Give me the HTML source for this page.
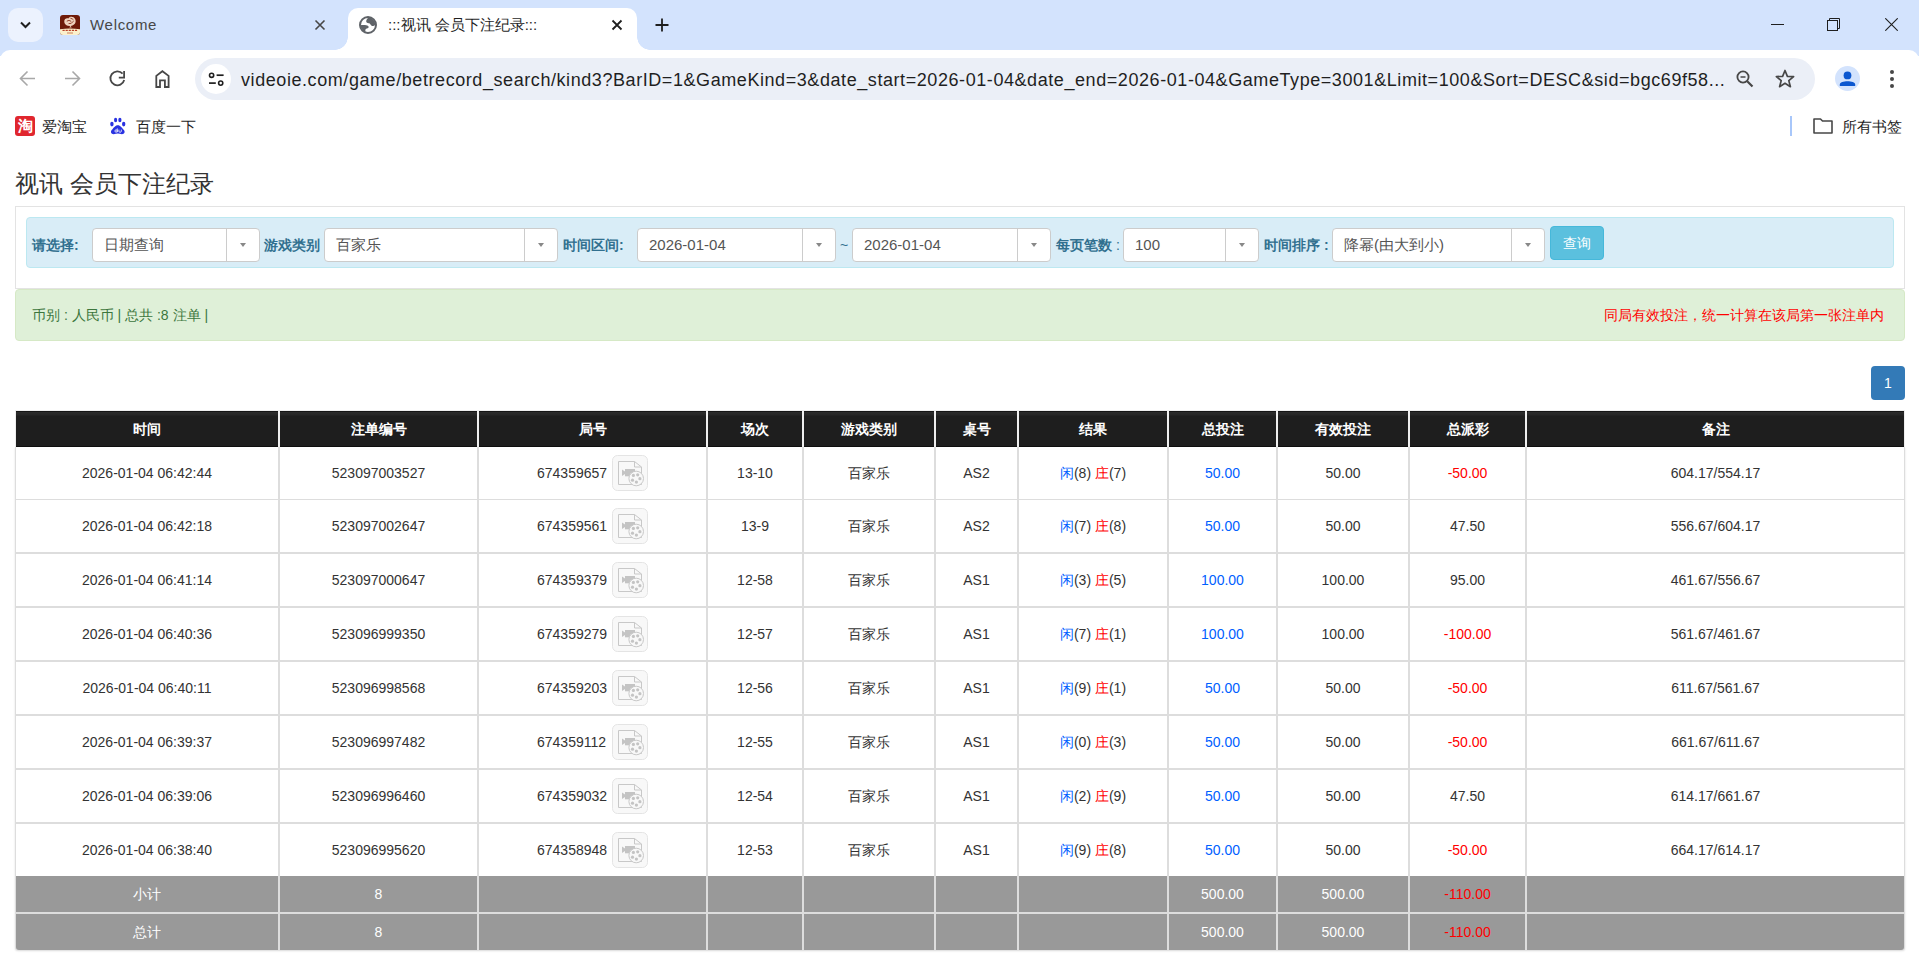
<!DOCTYPE html><html><head><meta charset="utf-8"><title>视讯 会员下注纪录</title><style>
*{box-sizing:border-box;margin:0;padding:0}
html,body{width:1919px;height:976px;overflow:hidden;background:#fff}
body{position:relative;font-family:"Liberation Sans",sans-serif;color:#333}
.a{position:absolute}
.tabstrip{left:0;top:0;width:1919px;height:56px;background:#d3e3fd}
.toolbar{left:0;top:50px;width:1919px;height:100px;background:#fff;border-radius:10px 10px 0 0}
.tabtxt{font-size:15px;color:#1f1f1f;white-space:nowrap;line-height:18px}
.omni{left:195px;top:58px;width:1620px;height:42px;border-radius:21px;background:#ebeff7}
.url{left:241px;top:68px;font-size:18px;line-height:24px;color:#1f1f1f;white-space:nowrap;letter-spacing:0.57px}
.bm{font-size:15px;color:#1f1f1f;line-height:18px;white-space:nowrap}
.title{left:15px;top:167px;font-size:24px;line-height:34px;color:#333;white-space:nowrap}
.well{left:15px;top:206px;width:1890px;height:83px;border:1px solid #e3e3e3;background:#fff}
.info{left:26px;top:217px;width:1868px;height:51px;border:1px solid #bce8f1;background:#d9edf7;border-radius:4px}
.lbl{font-size:14px;font-weight:bold;color:#31708f;line-height:20px;top:235px;white-space:nowrap}
.sel{top:228px;height:34px;background:#fff;border:1px solid #ccc;border-radius:4px}
.sel .t{position:absolute;left:11px;top:0;line-height:32px;font-size:15px;color:#555;white-space:nowrap}
.sel .d{position:absolute;top:0;bottom:0;width:1px;background:#ccc}
.sel .c{position:absolute;top:14px;width:0;height:0;border-left:3.5px solid transparent;border-right:3.5px solid transparent;border-top:4px solid #888}
.btn{left:1550px;top:226px;width:54px;height:34px;background:#5bc0de;border:1px solid #46b8da;border-radius:4px;color:#fff;font-size:14px;line-height:32px;text-align:center}
.succ{left:15px;top:289px;width:1890px;height:52px;background:#dff0d8;border:1px solid #d6e9c6;border-radius:4px}
.succ .l{position:absolute;left:16px;top:15px;font-size:14px;line-height:20px;color:#3c763d;white-space:nowrap}
.succ .r{position:absolute;right:20px;top:15px;font-size:14px;line-height:20px;color:#f00;white-space:nowrap}
.page{left:1871px;top:366px;width:34px;height:34px;background:#337ab7;border-radius:4px;color:#fff;font-size:14px;line-height:34px;text-align:center}
.cell{position:absolute;text-align:center;font-size:14px;white-space:nowrap}
.hd{background:linear-gradient(#151515 0,#151515 1px,#2b2b2b 1px,#262626 4px,#1e1e1e 5px,#1e1e1e 35px,#0e0e0e 35px);color:#fff;font-weight:bold}
.ft{background:#999;color:#fff}
.blue{color:#0060ff}
.red{color:#f00}
.vid{position:absolute;width:36px;height:36px}
</style></head><body>
<div class="a tabstrip"></div>
<div class="a" style="left:8px;top:8px;width:35px;height:34px;border-radius:10px;background:#ecf2fe"></div>
<svg class="a" style="left:17px;top:17px" width="16" height="16" viewBox="0 0 16 16"><path d="M4 5.5 L8.5 10 L13 5.5" fill="none" stroke="#1f1f1f" stroke-width="2"/></svg>
<svg class="a" style="left:60px;top:15px" width="20" height="20" viewBox="0 0 20 20"><defs><clipPath id="fc"><rect width="20" height="20" rx="3"/></clipPath></defs><g clip-path="url(#fc)"><rect width="20" height="20" fill="#6e1a08"/><path d="M0 14.2 Q10 12.6 20 14.2 V20 H0 Z" fill="#fbf0cc"/><path d="M2.5 15.4 H17.5" stroke="#b8422a" stroke-width="1.4" stroke-dasharray="2.2 0.9"/><path d="M7 18 H13" stroke="#c06040" stroke-width="0.8"/><path d="M4.3 7.2 C3.8 4.2 6.3 2.6 8.4 3.4 C9.4 1.1 13.6 0.9 15.1 4 C16.9 7.6 14.1 10.6 10.5 10.9 C7 11.1 4.7 9.6 4.3 7.2 Z" fill="#efd2bd"/><path d="M6.8 6.2 Q9 4.4 11.2 6.4 M8.6 8.6 Q11.6 9.2 13.4 6.2 M10.4 3.2 Q12.5 3.6 13.5 5" fill="none" stroke="#8a3520" stroke-width="0.9"/><path d="M10.5 10.8 L9.3 12.6 H11.7 Z" fill="#efd2bd"/></g></svg>
<div class="a tabtxt" style="left:90px;top:16px;color:#474747;letter-spacing:0.7px">Welcome</div>
<svg class="a" style="left:313px;top:18px" width="14" height="14" viewBox="0 0 14 14"><path d="M2.5 2.5 L11.5 11.5 M11.5 2.5 L2.5 11.5" stroke="#474747" stroke-width="1.6"/></svg>
<div class="a" style="left:348px;top:8px;width:289px;height:48px;background:#fff;border-radius:10px 10px 0 0"></div>
<div class="a" style="left:335px;top:37px;width:13px;height:13px;background:radial-gradient(circle at 0 0,#d3e3fd 12.5px,#fff 13px)"></div>
<div class="a" style="left:637px;top:37px;width:13px;height:13px;background:radial-gradient(circle at 100% 0,#d3e3fd 12.5px,#fff 13px)"></div>
<svg class="a" style="left:359px;top:16px" width="18" height="18" viewBox="0 0 18 18"><defs><clipPath id="gc"><circle cx="9" cy="9" r="7.5"/></clipPath></defs><circle cx="9" cy="9" r="8" fill="#fff" stroke="#5f6368" stroke-width="2"/><g clip-path="url(#gc)" fill="#5f6368"><path d="M9.6 0.5 C9.2 2.6 7 3.4 7.2 5.4 C7.4 7 9.6 6.8 10.8 7.6 C11.8 8.3 11.6 9.8 13.2 10 C14.8 10.2 16 9.2 17.5 8.5 L17.5 0.5 Z"/><path d="M0.5 9.2 C3.5 9.1 7.5 8.7 9.1 10 C10.2 11 9.6 12.4 7.9 12.6 C6.6 12.8 6.1 14 6.4 15.2 L7 17.5 L0.5 17.5 Z"/></g></svg>
<div class="a tabtxt" style="left:388px;top:16px">:::视讯 会员下注纪录:::</div>
<svg class="a" style="left:610px;top:18px" width="14" height="14" viewBox="0 0 14 14"><path d="M2.5 2.5 L11.5 11.5 M11.5 2.5 L2.5 11.5" stroke="#1f1f1f" stroke-width="1.8"/></svg>
<svg class="a" style="left:654px;top:17px" width="16" height="16" viewBox="0 0 16 16"><path d="M8 1.5 V14.5 M1.5 8 H14.5" stroke="#1f1f1f" stroke-width="1.8"/></svg>
<div class="a" style="left:1771px;top:24px;width:13px;height:1px;background:#1f1f1f"></div>
<svg class="a" style="left:1827px;top:18px" width="13" height="13" viewBox="0 0 13 13"><rect x="0.5" y="2.5" width="10" height="10" fill="none" stroke="#1f1f1f"/><path d="M2.5 2.5 V0.5 H12.5 V10.5 H10.5" fill="none" stroke="#1f1f1f"/></svg>
<svg class="a" style="left:1885px;top:18px" width="13" height="13" viewBox="0 0 13 13"><path d="M0.3 0.3 L12.7 12.7 M12.7 0.3 L0.3 12.7" stroke="#1f1f1f" stroke-width="1.1"/></svg>
<div class="a toolbar"></div>
<svg class="a" style="left:19px;top:70px" width="17" height="17" viewBox="0 0 17 17"><path d="M16 8.5 H2 M8.5 1.5 L1.5 8.5 L8.5 15.5" fill="none" stroke="#a8a8a8" stroke-width="1.6"/></svg>
<svg class="a" style="left:64px;top:70px" width="17" height="17" viewBox="0 0 17 17"><path d="M1 8.5 H15 M8.5 1.5 L15.5 8.5 L8.5 15.5" fill="none" stroke="#a8a8a8" stroke-width="1.6"/></svg>
<svg class="a" style="left:108px;top:69px" width="19" height="19" viewBox="0 0 19 19"><path d="M16.2 11 A7 7 0 1 1 14.6 4.6" fill="none" stroke="#474747" stroke-width="1.8"/><path d="M16.1 2 V8.6 H10.8" fill="none" stroke="#474747" stroke-width="1.8"/></svg>
<svg class="a" style="left:153px;top:69px" width="19" height="19" viewBox="0 0 19 19"><path d="M3.3 18 V6.9 L9.4 2.2 L15.6 6.9 V18 H11.9 V11.3 H7 V18 Z" fill="none" stroke="#474747" stroke-width="1.8" stroke-linejoin="miter"/></svg>
<div class="a omni"></div>
<div class="a" style="left:201px;top:64px;width:30px;height:30px;border-radius:15px;background:#fff"></div>
<svg class="a" style="left:207px;top:71px" width="18" height="16" viewBox="0 0 18 16"><circle cx="4.6" cy="4.3" r="2.1" fill="none" stroke="#1f1f1f" stroke-width="1.6"/><path d="M9.6 4.2 H16.6" stroke="#1f1f1f" stroke-width="1.7"/><circle cx="13.7" cy="12.1" r="2.1" fill="none" stroke="#1f1f1f" stroke-width="1.6"/><path d="M2 12.1 H8.8" stroke="#1f1f1f" stroke-width="1.7"/></svg>
<div class="a url">videoie.com/game/betrecord_search/kind3?BarID=1&amp;GameKind=3&amp;date_start=2026-01-04&amp;date_end=2026-01-04&amp;GameType=3001&amp;Limit=100&amp;Sort=DESC&amp;sid=bgc69f58...</div>
<svg class="a" style="left:1735px;top:69px" width="20" height="20" viewBox="0 0 20 20"><circle cx="8" cy="8" r="5.6" fill="none" stroke="#474747" stroke-width="1.8"/><path d="M12.2 12.2 L17.5 17.5" stroke="#474747" stroke-width="2.2"/><path d="M5.5 8 H10.5" stroke="#474747" stroke-width="1.5"/></svg>
<svg class="a" style="left:1774px;top:68px" width="22" height="22" viewBox="0 0 22 22"><path d="M11 2.5 L13.4 8.3 L19.6 8.6 L14.8 12.6 L16.4 18.7 L11 15.3 L5.6 18.7 L7.2 12.6 L2.4 8.6 L8.6 8.3 Z" fill="none" stroke="#474747" stroke-width="1.7" stroke-linejoin="round"/></svg>
<div class="a" style="left:1835px;top:66px;width:25px;height:25px;border-radius:13px;background:#d3e3fd"></div>
<svg class="a" style="left:1838px;top:69px" width="19" height="19" viewBox="0 0 19 19"><circle cx="9.5" cy="6.4" r="3.9" fill="#0b57d0"/><path d="M1.8 16.9 V15.6 C1.8 11.2 17.2 11.2 17.2 15.6 V16.9 Z" fill="#0b57d0"/></svg>
<svg class="a" style="left:1889px;top:69px" width="6" height="20" viewBox="0 0 6 20"><circle cx="3" cy="3" r="2" fill="#474747"/><circle cx="3" cy="10" r="2" fill="#474747"/><circle cx="3" cy="17" r="2" fill="#474747"/></svg>
<div class="a" style="left:15px;top:116px;width:20px;height:20px;border-radius:3px;background:#e0262e;color:#fff;font-size:15px;line-height:20px;text-align:center;font-weight:bold">淘</div>
<div class="a bm" style="left:42px;top:118px">爱淘宝</div>
<svg class="a" style="left:109px;top:117px" width="18" height="18" viewBox="0 0 18 18"><ellipse cx="2.9" cy="7.1" rx="1.7" ry="2.3" fill="#2932e1"/><ellipse cx="6.6" cy="3" rx="1.6" ry="2.2" fill="#2932e1"/><ellipse cx="10.9" cy="3" rx="1.6" ry="2.2" fill="#2932e1"/><ellipse cx="14.7" cy="7.1" rx="1.7" ry="2.3" fill="#2932e1"/><path d="M8.8 8.2 C6.2 8.2 4.6 11 2.9 12.8 C1.1 14.8 2.1 17.2 4.6 17.2 C6.1 17.2 7.5 16.6 8.8 16.6 C10.1 16.6 11.5 17.2 13 17.2 C15.5 17.2 16.5 14.8 14.7 12.8 C13 11 11.4 8.2 8.8 8.2 Z" fill="#2932e1"/><circle cx="7.1" cy="14" r="1.2" fill="none" stroke="#fff" stroke-width="0.8"/><path d="M8.3 11.4 V15.2 M9.9 12.6 V14.2 Q9.9 15.3 11.1 15.3 Q12.3 15.3 12.3 14.2 V12.6" fill="none" stroke="#fff" stroke-width="0.8"/></svg>
<div class="a bm" style="left:136px;top:118px">百度一下</div>
<div class="a" style="left:1790px;top:116px;width:2px;height:20px;background:#a8c7fa"></div>
<svg class="a" style="left:1813px;top:117px" width="20" height="17" viewBox="0 0 20 17"><path d="M1 2 H7.5 L9.5 4 H19 V16 H1 Z" fill="none" stroke="#474747" stroke-width="1.6" stroke-linejoin="round"/></svg>
<div class="a bm" style="left:1842px;top:118px">所有书签</div>
<div class="a title">视讯 会员下注纪录</div>
<div class="a well"></div>
<div class="a info"></div>
<div class="a lbl" style="left:32px">请选择:</div>
<div class="a sel" style="left:92px;width:168px"><span class="t">日期查询</span><span class="d" style="left:133px"></span><span class="c" style="left:147px"></span></div>
<div class="a lbl" style="left:264px">游戏类别</div>
<div class="a sel" style="left:324px;width:234px"><span class="t">百家乐</span><span class="d" style="left:199px"></span><span class="c" style="left:213px"></span></div>
<div class="a lbl" style="left:563px">时间区间:</div>
<div class="a sel" style="left:637px;width:199px"><span class="t">2026-01-04</span><span class="d" style="left:164px"></span><span class="c" style="left:178px"></span></div>
<div class="a" style="left:840px;top:235px;font-size:14px;line-height:20px;color:#31708f">~</div>
<div class="a sel" style="left:852px;width:199px"><span class="t">2026-01-04</span><span class="d" style="left:164px"></span><span class="c" style="left:178px"></span></div>
<div class="a lbl" style="left:1056px">每页笔数 <span style="font-weight:normal">:</span></div>
<div class="a sel" style="left:1123px;width:136px"><span class="t">100</span><span class="d" style="left:101px"></span><span class="c" style="left:115px"></span></div>
<div class="a lbl" style="left:1264px">时间排序 :</div>
<div class="a sel" style="left:1332px;width:213px"><span class="t">降幂(由大到小)</span><span class="d" style="left:178px"></span><span class="c" style="left:192px"></span></div>
<div class="a btn">查询</div>
<div class="a succ"><span class="l">币别 : 人民币 | 总共 :8 注单 |</span><span class="r">同局有效投注，统一计算在该局第一张注单内</span></div>
<div class="a page">1</div>
<div class="a" style="left:15px;top:410px;width:1890px;height:37px;background:#eee"></div>
<div class="a" style="left:15px;top:447px;width:1890px;height:503px;background:#ddd;border-radius:0 0 3px 3px;box-shadow:0 1px 2px rgba(0,0,0,0.15)"></div>
<div class="cell hd" style="left:16px;top:411px;width:262px;height:36px;line-height:36px;">时间</div>
<div class="cell hd" style="left:280px;top:411px;width:197px;height:36px;line-height:36px;">注单编号</div>
<div class="cell hd" style="left:479px;top:411px;width:227px;height:36px;line-height:36px;">局号</div>
<div class="cell hd" style="left:708px;top:411px;width:94px;height:36px;line-height:36px;">场次</div>
<div class="cell hd" style="left:804px;top:411px;width:130px;height:36px;line-height:36px;">游戏类别</div>
<div class="cell hd" style="left:936px;top:411px;width:81px;height:36px;line-height:36px;">桌号</div>
<div class="cell hd" style="left:1019px;top:411px;width:148px;height:36px;line-height:36px;">结果</div>
<div class="cell hd" style="left:1169px;top:411px;width:107px;height:36px;line-height:36px;">总投注</div>
<div class="cell hd" style="left:1278px;top:411px;width:130px;height:36px;line-height:36px;">有效投注</div>
<div class="cell hd" style="left:1410px;top:411px;width:115px;height:36px;line-height:36px;">总派彩</div>
<div class="cell hd" style="left:1527px;top:411px;width:377px;height:36px;line-height:36px;">备注</div>
<div class="cell " style="left:16px;top:447px;width:262px;height:52px;line-height:52px;background:#fff">2026-01-04 06:42:44</div>
<div class="cell " style="left:280px;top:447px;width:197px;height:52px;line-height:52px;background:#fff">523097003527</div>
<div class="cell " style="left:479px;top:447px;width:227px;height:52px;line-height:52px;background:#fff;text-align:left"><span style="position:absolute;left:58px">674359657</span><svg class="vid" style="left:133px;top:8px" width="36" height="36" viewBox="0 0 36 36"><rect x="0.5" y="0.5" width="35" height="35" rx="5" fill="#f8f8f8" stroke="#e4e4e4"/><path d="M6.5 6.5 H22.5 L29.5 12 V29.5 H6.5 Z" fill="none" stroke="#c8c8c8"/><path d="M22.5 6.5 V12 H29.5" fill="none" stroke="#c8c8c8"/><rect x="13" y="14" width="10" height="7.3" fill="#c4c4c4"/><path d="M10 14.5 L13 16.5 V19 L10 21 Z" fill="#c4c4c4"/><circle cx="24.2" cy="23.5" r="7.3" fill="#f8f8f8" stroke="#c8c8c8"/><circle cx="21.4" cy="20.4" r="1.6" fill="#c4c4c4"/><circle cx="25.7" cy="19.8" r="1.6" fill="#c4c4c4"/><circle cx="27.9" cy="23.7" r="1.6" fill="#c4c4c4"/><circle cx="24.4" cy="27.1" r="1.6" fill="#c4c4c4"/><circle cx="20.5" cy="25.2" r="1.6" fill="#c4c4c4"/></svg></div>
<div class="cell " style="left:708px;top:447px;width:94px;height:52px;line-height:52px;background:#fff">13-10</div>
<div class="cell " style="left:804px;top:447px;width:130px;height:52px;line-height:52px;background:#fff">百家乐</div>
<div class="cell " style="left:936px;top:447px;width:81px;height:52px;line-height:52px;background:#fff">AS2</div>
<div class="cell " style="left:1019px;top:447px;width:148px;height:52px;line-height:52px;background:#fff"><span class="blue">闲</span>(8) <span class="red">庄</span>(7)</div>
<div class="cell blue" style="left:1169px;top:447px;width:107px;height:52px;line-height:52px;background:#fff">50.00</div>
<div class="cell " style="left:1278px;top:447px;width:130px;height:52px;line-height:52px;background:#fff">50.00</div>
<div class="cell red" style="left:1410px;top:447px;width:115px;height:52px;line-height:52px;background:#fff">-50.00</div>
<div class="cell " style="left:1527px;top:447px;width:377px;height:52px;line-height:52px;background:#fff">604.17/554.17</div>
<div class="cell " style="left:16px;top:500px;width:262px;height:52px;line-height:52px;background:#fff">2026-01-04 06:42:18</div>
<div class="cell " style="left:280px;top:500px;width:197px;height:52px;line-height:52px;background:#fff">523097002647</div>
<div class="cell " style="left:479px;top:500px;width:227px;height:52px;line-height:52px;background:#fff;text-align:left"><span style="position:absolute;left:58px">674359561</span><svg class="vid" style="left:133px;top:8px" width="36" height="36" viewBox="0 0 36 36"><rect x="0.5" y="0.5" width="35" height="35" rx="5" fill="#f8f8f8" stroke="#e4e4e4"/><path d="M6.5 6.5 H22.5 L29.5 12 V29.5 H6.5 Z" fill="none" stroke="#c8c8c8"/><path d="M22.5 6.5 V12 H29.5" fill="none" stroke="#c8c8c8"/><rect x="13" y="14" width="10" height="7.3" fill="#c4c4c4"/><path d="M10 14.5 L13 16.5 V19 L10 21 Z" fill="#c4c4c4"/><circle cx="24.2" cy="23.5" r="7.3" fill="#f8f8f8" stroke="#c8c8c8"/><circle cx="21.4" cy="20.4" r="1.6" fill="#c4c4c4"/><circle cx="25.7" cy="19.8" r="1.6" fill="#c4c4c4"/><circle cx="27.9" cy="23.7" r="1.6" fill="#c4c4c4"/><circle cx="24.4" cy="27.1" r="1.6" fill="#c4c4c4"/><circle cx="20.5" cy="25.2" r="1.6" fill="#c4c4c4"/></svg></div>
<div class="cell " style="left:708px;top:500px;width:94px;height:52px;line-height:52px;background:#fff">13-9</div>
<div class="cell " style="left:804px;top:500px;width:130px;height:52px;line-height:52px;background:#fff">百家乐</div>
<div class="cell " style="left:936px;top:500px;width:81px;height:52px;line-height:52px;background:#fff">AS2</div>
<div class="cell " style="left:1019px;top:500px;width:148px;height:52px;line-height:52px;background:#fff"><span class="blue">闲</span>(7) <span class="red">庄</span>(8)</div>
<div class="cell blue" style="left:1169px;top:500px;width:107px;height:52px;line-height:52px;background:#fff">50.00</div>
<div class="cell " style="left:1278px;top:500px;width:130px;height:52px;line-height:52px;background:#fff">50.00</div>
<div class="cell " style="left:1410px;top:500px;width:115px;height:52px;line-height:52px;background:#fff">47.50</div>
<div class="cell " style="left:1527px;top:500px;width:377px;height:52px;line-height:52px;background:#fff">556.67/604.17</div>
<div class="cell " style="left:16px;top:554px;width:262px;height:52px;line-height:52px;background:#fff">2026-01-04 06:41:14</div>
<div class="cell " style="left:280px;top:554px;width:197px;height:52px;line-height:52px;background:#fff">523097000647</div>
<div class="cell " style="left:479px;top:554px;width:227px;height:52px;line-height:52px;background:#fff;text-align:left"><span style="position:absolute;left:58px">674359379</span><svg class="vid" style="left:133px;top:8px" width="36" height="36" viewBox="0 0 36 36"><rect x="0.5" y="0.5" width="35" height="35" rx="5" fill="#f8f8f8" stroke="#e4e4e4"/><path d="M6.5 6.5 H22.5 L29.5 12 V29.5 H6.5 Z" fill="none" stroke="#c8c8c8"/><path d="M22.5 6.5 V12 H29.5" fill="none" stroke="#c8c8c8"/><rect x="13" y="14" width="10" height="7.3" fill="#c4c4c4"/><path d="M10 14.5 L13 16.5 V19 L10 21 Z" fill="#c4c4c4"/><circle cx="24.2" cy="23.5" r="7.3" fill="#f8f8f8" stroke="#c8c8c8"/><circle cx="21.4" cy="20.4" r="1.6" fill="#c4c4c4"/><circle cx="25.7" cy="19.8" r="1.6" fill="#c4c4c4"/><circle cx="27.9" cy="23.7" r="1.6" fill="#c4c4c4"/><circle cx="24.4" cy="27.1" r="1.6" fill="#c4c4c4"/><circle cx="20.5" cy="25.2" r="1.6" fill="#c4c4c4"/></svg></div>
<div class="cell " style="left:708px;top:554px;width:94px;height:52px;line-height:52px;background:#fff">12-58</div>
<div class="cell " style="left:804px;top:554px;width:130px;height:52px;line-height:52px;background:#fff">百家乐</div>
<div class="cell " style="left:936px;top:554px;width:81px;height:52px;line-height:52px;background:#fff">AS1</div>
<div class="cell " style="left:1019px;top:554px;width:148px;height:52px;line-height:52px;background:#fff"><span class="blue">闲</span>(3) <span class="red">庄</span>(5)</div>
<div class="cell blue" style="left:1169px;top:554px;width:107px;height:52px;line-height:52px;background:#fff">100.00</div>
<div class="cell " style="left:1278px;top:554px;width:130px;height:52px;line-height:52px;background:#fff">100.00</div>
<div class="cell " style="left:1410px;top:554px;width:115px;height:52px;line-height:52px;background:#fff">95.00</div>
<div class="cell " style="left:1527px;top:554px;width:377px;height:52px;line-height:52px;background:#fff">461.67/556.67</div>
<div class="cell " style="left:16px;top:608px;width:262px;height:52px;line-height:52px;background:#fff">2026-01-04 06:40:36</div>
<div class="cell " style="left:280px;top:608px;width:197px;height:52px;line-height:52px;background:#fff">523096999350</div>
<div class="cell " style="left:479px;top:608px;width:227px;height:52px;line-height:52px;background:#fff;text-align:left"><span style="position:absolute;left:58px">674359279</span><svg class="vid" style="left:133px;top:8px" width="36" height="36" viewBox="0 0 36 36"><rect x="0.5" y="0.5" width="35" height="35" rx="5" fill="#f8f8f8" stroke="#e4e4e4"/><path d="M6.5 6.5 H22.5 L29.5 12 V29.5 H6.5 Z" fill="none" stroke="#c8c8c8"/><path d="M22.5 6.5 V12 H29.5" fill="none" stroke="#c8c8c8"/><rect x="13" y="14" width="10" height="7.3" fill="#c4c4c4"/><path d="M10 14.5 L13 16.5 V19 L10 21 Z" fill="#c4c4c4"/><circle cx="24.2" cy="23.5" r="7.3" fill="#f8f8f8" stroke="#c8c8c8"/><circle cx="21.4" cy="20.4" r="1.6" fill="#c4c4c4"/><circle cx="25.7" cy="19.8" r="1.6" fill="#c4c4c4"/><circle cx="27.9" cy="23.7" r="1.6" fill="#c4c4c4"/><circle cx="24.4" cy="27.1" r="1.6" fill="#c4c4c4"/><circle cx="20.5" cy="25.2" r="1.6" fill="#c4c4c4"/></svg></div>
<div class="cell " style="left:708px;top:608px;width:94px;height:52px;line-height:52px;background:#fff">12-57</div>
<div class="cell " style="left:804px;top:608px;width:130px;height:52px;line-height:52px;background:#fff">百家乐</div>
<div class="cell " style="left:936px;top:608px;width:81px;height:52px;line-height:52px;background:#fff">AS1</div>
<div class="cell " style="left:1019px;top:608px;width:148px;height:52px;line-height:52px;background:#fff"><span class="blue">闲</span>(7) <span class="red">庄</span>(1)</div>
<div class="cell blue" style="left:1169px;top:608px;width:107px;height:52px;line-height:52px;background:#fff">100.00</div>
<div class="cell " style="left:1278px;top:608px;width:130px;height:52px;line-height:52px;background:#fff">100.00</div>
<div class="cell red" style="left:1410px;top:608px;width:115px;height:52px;line-height:52px;background:#fff">-100.00</div>
<div class="cell " style="left:1527px;top:608px;width:377px;height:52px;line-height:52px;background:#fff">561.67/461.67</div>
<div class="cell " style="left:16px;top:662px;width:262px;height:52px;line-height:52px;background:#fff">2026-01-04 06:40:11</div>
<div class="cell " style="left:280px;top:662px;width:197px;height:52px;line-height:52px;background:#fff">523096998568</div>
<div class="cell " style="left:479px;top:662px;width:227px;height:52px;line-height:52px;background:#fff;text-align:left"><span style="position:absolute;left:58px">674359203</span><svg class="vid" style="left:133px;top:8px" width="36" height="36" viewBox="0 0 36 36"><rect x="0.5" y="0.5" width="35" height="35" rx="5" fill="#f8f8f8" stroke="#e4e4e4"/><path d="M6.5 6.5 H22.5 L29.5 12 V29.5 H6.5 Z" fill="none" stroke="#c8c8c8"/><path d="M22.5 6.5 V12 H29.5" fill="none" stroke="#c8c8c8"/><rect x="13" y="14" width="10" height="7.3" fill="#c4c4c4"/><path d="M10 14.5 L13 16.5 V19 L10 21 Z" fill="#c4c4c4"/><circle cx="24.2" cy="23.5" r="7.3" fill="#f8f8f8" stroke="#c8c8c8"/><circle cx="21.4" cy="20.4" r="1.6" fill="#c4c4c4"/><circle cx="25.7" cy="19.8" r="1.6" fill="#c4c4c4"/><circle cx="27.9" cy="23.7" r="1.6" fill="#c4c4c4"/><circle cx="24.4" cy="27.1" r="1.6" fill="#c4c4c4"/><circle cx="20.5" cy="25.2" r="1.6" fill="#c4c4c4"/></svg></div>
<div class="cell " style="left:708px;top:662px;width:94px;height:52px;line-height:52px;background:#fff">12-56</div>
<div class="cell " style="left:804px;top:662px;width:130px;height:52px;line-height:52px;background:#fff">百家乐</div>
<div class="cell " style="left:936px;top:662px;width:81px;height:52px;line-height:52px;background:#fff">AS1</div>
<div class="cell " style="left:1019px;top:662px;width:148px;height:52px;line-height:52px;background:#fff"><span class="blue">闲</span>(9) <span class="red">庄</span>(1)</div>
<div class="cell blue" style="left:1169px;top:662px;width:107px;height:52px;line-height:52px;background:#fff">50.00</div>
<div class="cell " style="left:1278px;top:662px;width:130px;height:52px;line-height:52px;background:#fff">50.00</div>
<div class="cell red" style="left:1410px;top:662px;width:115px;height:52px;line-height:52px;background:#fff">-50.00</div>
<div class="cell " style="left:1527px;top:662px;width:377px;height:52px;line-height:52px;background:#fff">611.67/561.67</div>
<div class="cell " style="left:16px;top:716px;width:262px;height:52px;line-height:52px;background:#fff">2026-01-04 06:39:37</div>
<div class="cell " style="left:280px;top:716px;width:197px;height:52px;line-height:52px;background:#fff">523096997482</div>
<div class="cell " style="left:479px;top:716px;width:227px;height:52px;line-height:52px;background:#fff;text-align:left"><span style="position:absolute;left:58px">674359112</span><svg class="vid" style="left:133px;top:8px" width="36" height="36" viewBox="0 0 36 36"><rect x="0.5" y="0.5" width="35" height="35" rx="5" fill="#f8f8f8" stroke="#e4e4e4"/><path d="M6.5 6.5 H22.5 L29.5 12 V29.5 H6.5 Z" fill="none" stroke="#c8c8c8"/><path d="M22.5 6.5 V12 H29.5" fill="none" stroke="#c8c8c8"/><rect x="13" y="14" width="10" height="7.3" fill="#c4c4c4"/><path d="M10 14.5 L13 16.5 V19 L10 21 Z" fill="#c4c4c4"/><circle cx="24.2" cy="23.5" r="7.3" fill="#f8f8f8" stroke="#c8c8c8"/><circle cx="21.4" cy="20.4" r="1.6" fill="#c4c4c4"/><circle cx="25.7" cy="19.8" r="1.6" fill="#c4c4c4"/><circle cx="27.9" cy="23.7" r="1.6" fill="#c4c4c4"/><circle cx="24.4" cy="27.1" r="1.6" fill="#c4c4c4"/><circle cx="20.5" cy="25.2" r="1.6" fill="#c4c4c4"/></svg></div>
<div class="cell " style="left:708px;top:716px;width:94px;height:52px;line-height:52px;background:#fff">12-55</div>
<div class="cell " style="left:804px;top:716px;width:130px;height:52px;line-height:52px;background:#fff">百家乐</div>
<div class="cell " style="left:936px;top:716px;width:81px;height:52px;line-height:52px;background:#fff">AS1</div>
<div class="cell " style="left:1019px;top:716px;width:148px;height:52px;line-height:52px;background:#fff"><span class="blue">闲</span>(0) <span class="red">庄</span>(3)</div>
<div class="cell blue" style="left:1169px;top:716px;width:107px;height:52px;line-height:52px;background:#fff">50.00</div>
<div class="cell " style="left:1278px;top:716px;width:130px;height:52px;line-height:52px;background:#fff">50.00</div>
<div class="cell red" style="left:1410px;top:716px;width:115px;height:52px;line-height:52px;background:#fff">-50.00</div>
<div class="cell " style="left:1527px;top:716px;width:377px;height:52px;line-height:52px;background:#fff">661.67/611.67</div>
<div class="cell " style="left:16px;top:770px;width:262px;height:52px;line-height:52px;background:#fff">2026-01-04 06:39:06</div>
<div class="cell " style="left:280px;top:770px;width:197px;height:52px;line-height:52px;background:#fff">523096996460</div>
<div class="cell " style="left:479px;top:770px;width:227px;height:52px;line-height:52px;background:#fff;text-align:left"><span style="position:absolute;left:58px">674359032</span><svg class="vid" style="left:133px;top:8px" width="36" height="36" viewBox="0 0 36 36"><rect x="0.5" y="0.5" width="35" height="35" rx="5" fill="#f8f8f8" stroke="#e4e4e4"/><path d="M6.5 6.5 H22.5 L29.5 12 V29.5 H6.5 Z" fill="none" stroke="#c8c8c8"/><path d="M22.5 6.5 V12 H29.5" fill="none" stroke="#c8c8c8"/><rect x="13" y="14" width="10" height="7.3" fill="#c4c4c4"/><path d="M10 14.5 L13 16.5 V19 L10 21 Z" fill="#c4c4c4"/><circle cx="24.2" cy="23.5" r="7.3" fill="#f8f8f8" stroke="#c8c8c8"/><circle cx="21.4" cy="20.4" r="1.6" fill="#c4c4c4"/><circle cx="25.7" cy="19.8" r="1.6" fill="#c4c4c4"/><circle cx="27.9" cy="23.7" r="1.6" fill="#c4c4c4"/><circle cx="24.4" cy="27.1" r="1.6" fill="#c4c4c4"/><circle cx="20.5" cy="25.2" r="1.6" fill="#c4c4c4"/></svg></div>
<div class="cell " style="left:708px;top:770px;width:94px;height:52px;line-height:52px;background:#fff">12-54</div>
<div class="cell " style="left:804px;top:770px;width:130px;height:52px;line-height:52px;background:#fff">百家乐</div>
<div class="cell " style="left:936px;top:770px;width:81px;height:52px;line-height:52px;background:#fff">AS1</div>
<div class="cell " style="left:1019px;top:770px;width:148px;height:52px;line-height:52px;background:#fff"><span class="blue">闲</span>(2) <span class="red">庄</span>(9)</div>
<div class="cell blue" style="left:1169px;top:770px;width:107px;height:52px;line-height:52px;background:#fff">50.00</div>
<div class="cell " style="left:1278px;top:770px;width:130px;height:52px;line-height:52px;background:#fff">50.00</div>
<div class="cell " style="left:1410px;top:770px;width:115px;height:52px;line-height:52px;background:#fff">47.50</div>
<div class="cell " style="left:1527px;top:770px;width:377px;height:52px;line-height:52px;background:#fff">614.17/661.67</div>
<div class="cell " style="left:16px;top:824px;width:262px;height:52px;line-height:52px;background:#fff">2026-01-04 06:38:40</div>
<div class="cell " style="left:280px;top:824px;width:197px;height:52px;line-height:52px;background:#fff">523096995620</div>
<div class="cell " style="left:479px;top:824px;width:227px;height:52px;line-height:52px;background:#fff;text-align:left"><span style="position:absolute;left:58px">674358948</span><svg class="vid" style="left:133px;top:8px" width="36" height="36" viewBox="0 0 36 36"><rect x="0.5" y="0.5" width="35" height="35" rx="5" fill="#f8f8f8" stroke="#e4e4e4"/><path d="M6.5 6.5 H22.5 L29.5 12 V29.5 H6.5 Z" fill="none" stroke="#c8c8c8"/><path d="M22.5 6.5 V12 H29.5" fill="none" stroke="#c8c8c8"/><rect x="13" y="14" width="10" height="7.3" fill="#c4c4c4"/><path d="M10 14.5 L13 16.5 V19 L10 21 Z" fill="#c4c4c4"/><circle cx="24.2" cy="23.5" r="7.3" fill="#f8f8f8" stroke="#c8c8c8"/><circle cx="21.4" cy="20.4" r="1.6" fill="#c4c4c4"/><circle cx="25.7" cy="19.8" r="1.6" fill="#c4c4c4"/><circle cx="27.9" cy="23.7" r="1.6" fill="#c4c4c4"/><circle cx="24.4" cy="27.1" r="1.6" fill="#c4c4c4"/><circle cx="20.5" cy="25.2" r="1.6" fill="#c4c4c4"/></svg></div>
<div class="cell " style="left:708px;top:824px;width:94px;height:52px;line-height:52px;background:#fff">12-53</div>
<div class="cell " style="left:804px;top:824px;width:130px;height:52px;line-height:52px;background:#fff">百家乐</div>
<div class="cell " style="left:936px;top:824px;width:81px;height:52px;line-height:52px;background:#fff">AS1</div>
<div class="cell " style="left:1019px;top:824px;width:148px;height:52px;line-height:52px;background:#fff"><span class="blue">闲</span>(9) <span class="red">庄</span>(8)</div>
<div class="cell blue" style="left:1169px;top:824px;width:107px;height:52px;line-height:52px;background:#fff">50.00</div>
<div class="cell " style="left:1278px;top:824px;width:130px;height:52px;line-height:52px;background:#fff">50.00</div>
<div class="cell red" style="left:1410px;top:824px;width:115px;height:52px;line-height:52px;background:#fff">-50.00</div>
<div class="cell " style="left:1527px;top:824px;width:377px;height:52px;line-height:52px;background:#fff">664.17/614.17</div>
<div class="cell ft" style="left:16px;top:876px;width:262px;height:36px;line-height:36px;">小计</div>
<div class="cell ft" style="left:280px;top:876px;width:197px;height:36px;line-height:36px;">8</div>
<div class="cell ft" style="left:479px;top:876px;width:227px;height:36px;line-height:36px;"></div>
<div class="cell ft" style="left:708px;top:876px;width:94px;height:36px;line-height:36px;"></div>
<div class="cell ft" style="left:804px;top:876px;width:130px;height:36px;line-height:36px;"></div>
<div class="cell ft" style="left:936px;top:876px;width:81px;height:36px;line-height:36px;"></div>
<div class="cell ft" style="left:1019px;top:876px;width:148px;height:36px;line-height:36px;"></div>
<div class="cell ft" style="left:1169px;top:876px;width:107px;height:36px;line-height:36px;">500.00</div>
<div class="cell ft" style="left:1278px;top:876px;width:130px;height:36px;line-height:36px;">500.00</div>
<div class="cell ft" style="left:1410px;top:876px;width:115px;height:36px;line-height:36px;"><span class="red">-110.00</span></div>
<div class="cell ft" style="left:1527px;top:876px;width:377px;height:36px;line-height:36px;"></div>
<div class="cell ft" style="left:16px;top:914px;width:262px;height:36px;line-height:36px;border-bottom-left-radius:3px">总计</div>
<div class="cell ft" style="left:280px;top:914px;width:197px;height:36px;line-height:36px;">8</div>
<div class="cell ft" style="left:479px;top:914px;width:227px;height:36px;line-height:36px;"></div>
<div class="cell ft" style="left:708px;top:914px;width:94px;height:36px;line-height:36px;"></div>
<div class="cell ft" style="left:804px;top:914px;width:130px;height:36px;line-height:36px;"></div>
<div class="cell ft" style="left:936px;top:914px;width:81px;height:36px;line-height:36px;"></div>
<div class="cell ft" style="left:1019px;top:914px;width:148px;height:36px;line-height:36px;"></div>
<div class="cell ft" style="left:1169px;top:914px;width:107px;height:36px;line-height:36px;">500.00</div>
<div class="cell ft" style="left:1278px;top:914px;width:130px;height:36px;line-height:36px;">500.00</div>
<div class="cell ft" style="left:1410px;top:914px;width:115px;height:36px;line-height:36px;"><span class="red">-110.00</span></div>
<div class="cell ft" style="left:1527px;top:914px;width:377px;height:36px;line-height:36px;border-bottom-right-radius:3px"></div>
</body></html>
